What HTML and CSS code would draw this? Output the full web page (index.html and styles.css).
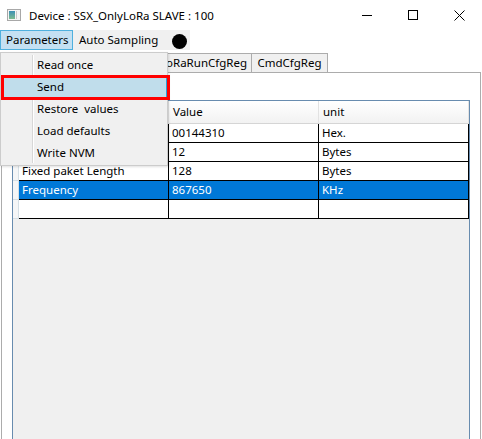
FILE: index.html
```html
<!DOCTYPE html>
<html>
<head>
<meta charset="utf-8">
<link rel="stylesheet" href="styles.css">
</head>
<body>
<div class="window">
  <div class="titlebar">
    <svg class="app-icon" width="16" height="16" viewBox="0 0 16 16">
      <defs>
        <linearGradient id="ig" x1="0" y1="0" x2="0" y2="1">
          <stop offset="0" stop-color="#3b8fb5"/>
          <stop offset="1" stop-color="#7dbb8e"/>
        </linearGradient>
      </defs>
      <rect x="1.5" y="2.5" width="13" height="11" fill="#f4f4f4" stroke="#a8a8a8"/>
      <rect x="3" y="4" width="6" height="8" fill="url(#ig)"/>
      <rect x="10" y="4" width="1" height="8" fill="#c8c8c8"/>
    </svg>
    <span class="title">Device : SSX_OnlyLoRa SLAVE : 100</span>
    <div class="caption">
      <div class="cbtn"><svg width="10" height="10" viewBox="0 0 10 10"><rect x="0" y="5" width="10" height="1" fill="#000"/></svg></div>
      <div class="cbtn"><svg width="10" height="10" viewBox="0 0 10 10"><rect x="0.5" y="0.5" width="9" height="9" fill="none" stroke="#000"/></svg></div>
      <div class="cbtn"><svg width="11" height="11" viewBox="0 0 11 11"><path d="M0.5 0.5 L10.5 10.5 M10.5 0.5 L0.5 10.5" stroke="#000" stroke-width="1"/></svg></div>
    </div>
  </div>

  <div class="menubar">
    <div class="mitem mitem-params open">Parameters</div>
    <div class="mitem mitem-auto">Auto Sampling</div>
    <div class="dot"></div>
  </div>

  <div class="tabs">
    <div class="tabstrip">
      <div class="tab tab-a"></div>
      <div class="tab tab-b"><span class="tab-clip">oRaRunCfgReg</span></div>
      <div class="tab tab-c">CmdCfgReg</div>
    </div>
    <div class="panel">
      <div class="grid">
        <div class="grow ghead">
          <div class="rh"></div>
          <div class="hc"></div>
          <div class="hc">Value</div>
          <div class="hc">unit</div>
        </div>
        <div class="grow">
          <div class="rh"></div>
          <div class="c"></div>
          <div class="c">00144310</div>
          <div class="c">Hex.</div>
        </div>
        <div class="grow">
          <div class="rh"></div>
          <div class="c"></div>
          <div class="c">12</div>
          <div class="c">Bytes</div>
        </div>
        <div class="grow">
          <div class="rh"></div>
          <div class="c">Fixed paket Length</div>
          <div class="c">128</div>
          <div class="c">Bytes</div>
        </div>
        <div class="grow sel">
          <div class="rh"></div>
          <div class="c">Frequency</div>
          <div class="c">867650</div>
          <div class="c">KHz</div>
        </div>
        <div class="grow">
          <div class="rh"></div>
          <div class="c"></div>
          <div class="c"></div>
          <div class="c"></div>
        </div>
      </div>
    </div>
  </div>

  <div class="popup">
    <div class="pitem">Read once</div>
    <div class="pitem hl">Send</div>
    <div class="pitem">Restore  values</div>
    <div class="pitem">Load defaults</div>
    <div class="pitem">Write NVM</div>
  </div>
  <div class="annot"></div>
</div>
</body>
</html>
```

FILE: styles.css
```css
* { box-sizing: border-box; }
html, body { margin: 0; padding: 0; }
body {
  width: 482px;
  height: 439px;
  overflow: hidden;
  background: #fff;
  font-family: "Noto Sans", "Segoe UI", sans-serif;
  font-size: 11.5px;
  color: #000;
}
.window {
  position: relative;
  width: 482px;
  height: 439px;
  overflow: hidden;
  background: #fff;
  display: flex;
  flex-direction: column;
}
.titlebar {
  height: 30px;
  flex: none;
  display: flex;
  align-items: center;
}
.app-icon { margin-left: 6px; flex: none; }
.title { margin-left: 7px; white-space: nowrap; }
.caption { margin-left: auto; display: flex; }
.cbtn {
  width: 46px;
  height: 30px;
  display: flex;
  align-items: center;
  justify-content: center;
}

.menubar {
  height: 20px;
  width: 190px;
  flex: none;
  background: #f0f0f0;
  display: flex;
  align-items: center;
}
.mitem {
  height: 20px;
  padding: 0 0 0 5px;
  line-height: 18px;
  border: 1px solid transparent;
  white-space: nowrap;
}
.mitem-params { width: 73px; }
.mitem-auto { width: 92px; }
.mitem.open {
  background: #c4e0f2;
  border-color: #4fb0de;
}
.dot {
  width: 15px;
  height: 15px;
  border-radius: 50%;
  background: #000;
  margin-left: 7px;
  margin-top: 3px;
}

.tabs { flex: 1; display: flex; flex-direction: column; }
.tabstrip {
  height: 22px;
  flex: none;
  padding-top: 3px;
  padding-left: 2px;
  display: flex;
}
.tab {
  height: 19px;
  border: 1px solid #acacac;
  border-bottom: none;
  background: #f0f0f0;
  line-height: 17px;
  margin-right: -1px;
  display: flex;
  justify-content: center;
  white-space: nowrap;
  overflow: hidden;
}
.tab-a { width: 155px; background: #fff; }
.tab-b { width: 96px; justify-content: flex-end; padding-right: 4px; }
.tab-c { width: 77px; }

.panel {
  flex: 1;
  margin-left: 1px;
  width: 480px;
  border: 1px solid #acacac;
  background: #fff;
  padding: 27px 10px 0 10px;
  overflow: hidden;
}
.grid {
  border: 1px solid #688caf;
  background: #f0f0f0;
  height: 400px;
}
.grow {
  display: flex;
  height: 19px;
}
.rh {
  width: 6px;
  flex: none;
  background: #f5f6f7;
  border-right: 1px solid #d5dfe5;
  border-bottom: 1px solid #d5dfe5;
}
.c {
  width: 150px;
  flex: none;
  background: #fff;
  border-right: 1px solid #000;
  border-bottom: 1px solid #000;
  padding-left: 3px;
  line-height: 18px;
  white-space: nowrap;
  overflow: hidden;
}
.sel .c { background: #0078d7; color: #fff; }
.ghead { height: 23px; }
.hc {
  width: 150px;
  flex: none;
  background: linear-gradient(#ffffff, #f2f2f2);
  border-right: 1px solid #e2e2e2;
  border-bottom: 1px solid #d5d5d5;
  padding-left: 4px;
  line-height: 22px;
  white-space: nowrap;
}

.popup {
  position: absolute;
  left: 0;
  top: 52px;
  width: 168px;
  height: 114px;
  background: #f0f0f0;
  border: 1px solid #cccccc;
  padding: 1px 0 1px 2px;
  box-shadow: 1px 1px 2px rgba(0, 0, 0, 0.12);
}
.popup::before {
  content: "";
  position: absolute;
  left: 31px;
  top: 2px;
  bottom: 2px;
  width: 1px;
  background: #d7d7d7;
  border-right: 1px solid #fff;
}
.pitem {
  position: relative;
  height: 22px;
  padding-left: 33px;
  line-height: 20px;
  border: 1px solid transparent;
  white-space: pre;
}
.pitem.hl {
  background: #c0ddeb;
  border-color: #26a0da;
}
.annot {
  position: absolute;
  left: 1px;
  top: 75px;
  width: 169px;
  height: 25px;
  border: 3px solid #ff0000;
}
```
